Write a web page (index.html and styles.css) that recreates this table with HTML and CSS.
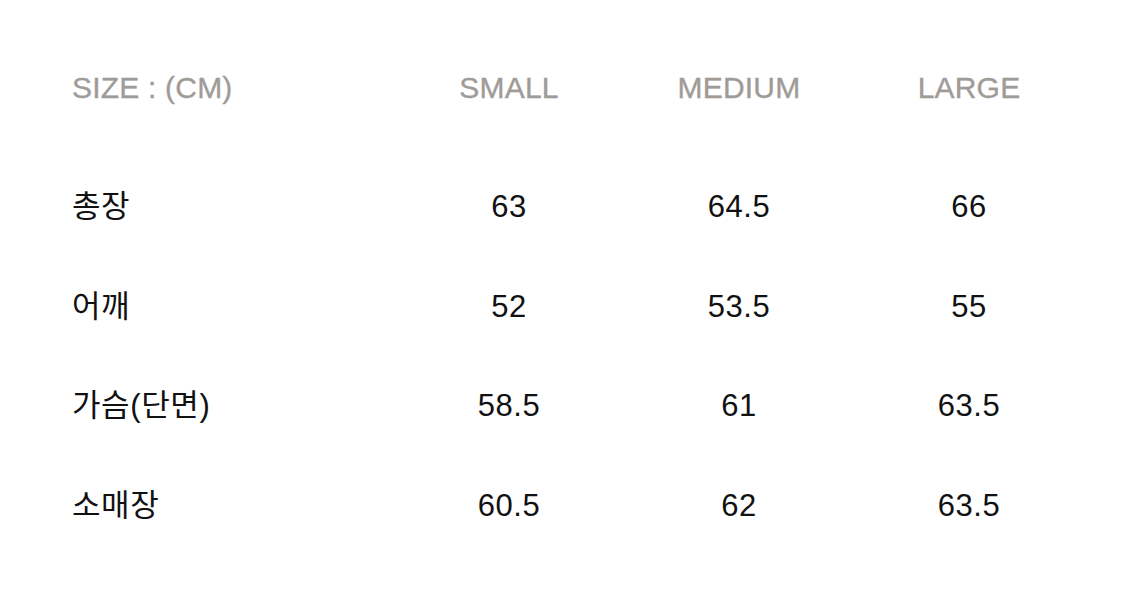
FILE: index.html
```html
<!DOCTYPE html>
<html lang="ko">
<head>
<meta charset="utf-8">
<title>Size</title>
<link rel="stylesheet" href="styles.css">
</head>
<body>
<div class="size-table">
  <div class="row head">
    <div class="label">SIZE : (CM)</div>
    <div class="cell">SMALL</div>
    <div class="cell">MEDIUM</div>
    <div class="cell">LARGE</div>
  </div>
  <div class="row">
    <div class="label">총장</div>
    <div class="cell">63</div>
    <div class="cell">64.5</div>
    <div class="cell">66</div>
  </div>
  <div class="row">
    <div class="label">어깨</div>
    <div class="cell">52</div>
    <div class="cell">53.5</div>
    <div class="cell">55</div>
  </div>
  <div class="row">
    <div class="label">가슴(단면)</div>
    <div class="cell">58.5</div>
    <div class="cell">61</div>
    <div class="cell">63.5</div>
  </div>
  <div class="row">
    <div class="label">소매장</div>
    <div class="cell">60.5</div>
    <div class="cell">62</div>
    <div class="cell">63.5</div>
  </div>
</div>
</body>
</html>
```
FILE: styles.css
```css
html, body {
  margin: 0;
  padding: 0;
  background: #ffffff;
}
body {
  font-family: "Liberation Sans", "Noto Sans CJK KR", Arial, sans-serif;
  color: #111111;
}
.size-table {
  padding: 38px 0 0 72px;
}
.row {
  display: grid;
  grid-template-columns: 322px 230px 230px 230px;
  height: 99.5px;
  line-height: 99.5px;
  font-size: 31px;
  letter-spacing: 0.6px;
}
.row.head {
  height: 100px;
  line-height: 100px;
  margin-bottom: 19px;
  font-size: 30px;
  color: #9f9b97;
  letter-spacing: 0.2px;
  -webkit-text-stroke: 0.35px #9f9b97;
}
.label {
  white-space: nowrap;
}
.cell {
  text-align: center;
  white-space: nowrap;
}
```
